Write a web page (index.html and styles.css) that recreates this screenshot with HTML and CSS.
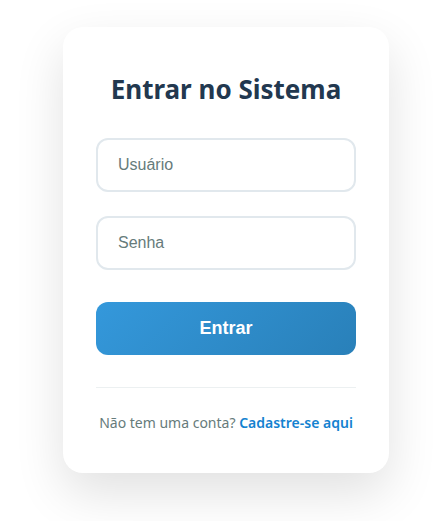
FILE: index.html
```html
<!DOCTYPE html>
<html lang="pt-BR">
<head>
	<meta charset="utf-8">
	<meta name="viewport" content="width=device-width, initial-scale=1">
	<title>Entrar no Sistema</title>
	<link rel="stylesheet" href="styles.css">
</head>
<body>
	<main class="login-container">
		<h2>Entrar no Sistema</h2>
		<form class="login-form" method="post">
			<input type="text" name="usuario" placeholder="Usuário" aria-label="Usuário" required>
			<input type="password" name="senha" placeholder="Senha" aria-label="Senha" required>
			<button type="submit">Entrar</button>
		</form>
		<p class="register">Não tem uma conta? <a href="#cadastro">Cadastre-se aqui</a></p>
	</main>
</body>
</html>
```

FILE: styles.css
```css
* {
	box-sizing: border-box;
}

body {
	margin: 0;
	padding: 27px 52px 48px 63px;
	background: #ffffff;
	font-family: "Segoe UI", "Noto Sans", sans-serif;
}

.login-container {
	max-width: 420px;
	margin: 0 auto;
	padding: 40px 33px;
	background: #ffffff;
	border-radius: 20px;
	box-shadow: 0 20px 50px rgba(0, 0, 0, 0.12);
}

h2 {
	margin: 0 0 27px;
	color: #22384f;
	font-size: 26px;
	font-weight: 700;
	line-height: 44px;
	text-align: center;
}

.login-form {
	display: flex;
	flex-direction: column;
	gap: 24px;
}

.login-form input {
	width: 100%;
	height: 54px;
	padding: 0 20px;
	border: 2px solid #e1e8ed;
	border-radius: 12px;
	background: #ffffff;
	color: #2c3e50;
	font-family: "Liberation Sans", Arial, sans-serif;
	font-size: 16px;
}

.login-form input::placeholder {
	color: #667b7b;
	opacity: 1;
}

.login-form input:focus {
	border-color: #3498db;
	outline: none;
}

.login-form button {
	height: 53px;
	margin-top: 8px;
	border: none;
	border-radius: 12px;
	background: linear-gradient(135deg, #3498db, #2980b9);
	color: #ffffff;
	font-family: "Liberation Sans", Arial, sans-serif;
	font-size: 18px;
	font-weight: 600;
	cursor: pointer;
}

.register {
	margin: 32px 0 0;
	padding-top: 24px;
	border-top: 1px solid #ecf0f1;
	color: #667b7b;
	font-size: 14px;
	line-height: 21px;
	text-align: center;
}

.register a {
	color: #1482d0;
	font-weight: 600;
	text-decoration: none;
}
```
